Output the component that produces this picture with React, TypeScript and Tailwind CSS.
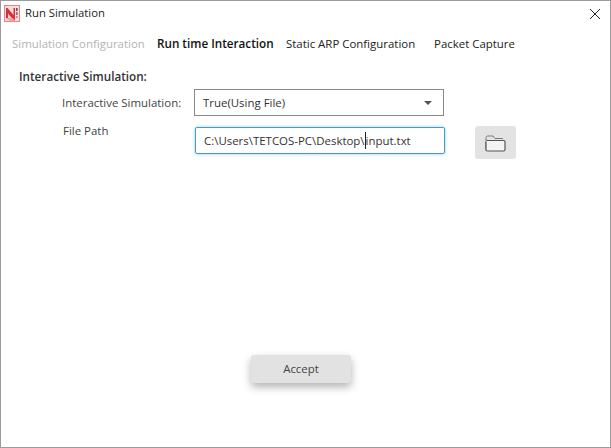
import React from "react";

const font = { fontFamily: '"Open Sans", "Noto Sans", sans-serif' };

function Logo() {
  return (
    <svg width="16" height="17" viewBox="0 0 16 17" className="shrink-0">
      <rect x="0" y="0" width="16" height="17" fill="#fbdcdc" />
      <rect x="0.5" y="0.5" width="15" height="16" fill="none" stroke="#ee8080" />
      <path d="M2 13V3h1.5l6 7V3H11v12H9.5L4 8.5V13z" fill="#d8303a" />
      <path d="M2 13l4 3h5l-2-3z" fill="#f0a0a0" />
      <rect x="12" y="3" width="1.6" height="3" fill="#555" />
      <rect x="12" y="7" width="1.6" height="3" fill="#777" />
      <rect x="12" y="11" width="1.6" height="2" fill="#999" />
    </svg>
  );
}

function FolderIcon() {
  return (
    <svg width="21" height="18" viewBox="0 0 21 18" fill="none">
      <path d="M1 16.5V3.5Q1 2 2.5 2H8l2 2.5h8" stroke="#7a7a7a" strokeWidth="1" />
      <path d="M1.5 6.5H18.5Q20 6.5 20 8V15.5Q20 17 18.5 17H2.5Q1 17 1 15.5V7.5" stroke="#555" strokeWidth="1.2" fill="#f4f4f4" />
    </svg>
  );
}

export default function App() {
  return (
    <div style={font} className="w-[611px] h-[448px] bg-white border border-[#9b9b9b] flex flex-col text-[11.45px] text-[#333] overflow-hidden">
      <div className="h-[25px] flex items-center pl-[3px] pr-[9px] shrink-0">
        <Logo />
        <span className="ml-[5px] text-[#222] text-[11.3px]">Run Simulation</span>
        <svg width="12" height="12" viewBox="0 0 12 12" className="ml-auto" stroke="#222" strokeWidth="1">
          <path d="M1 1l10 10M11 1L1 11" />
        </svg>
      </div>

      <div className="flex items-center h-[35px] pl-[11px] shrink-0">
        <span className="text-[#b4b4b4] w-[145px]">Simulation Configuration</span>
        <span className="font-semibold text-[#111] w-[129px] text-[11.7px]">Run time Interaction</span>
        <span className="text-[#222] w-[148px]">Static ARP Configuration</span>
        <span className="text-[#222]">Packet Capture</span>
      </div>

      <div className="pl-[18px] pt-[7px] font-semibold leading-[16px] text-[#333] text-[11.7px]">Interactive Simulation:</div>

      <div className="flex items-center pl-[61px] mt-[5px]">
        <span className="w-[132px] text-[#444]">Interactive Simulation:</span>
        <div className="w-[250px] h-[27px] border border-[#8a8a8a] flex items-center pl-[8px] pr-[11px] justify-between">
          <span>True(Using File)</span>
          <span className="w-0 h-0 border-x-[4px] border-x-transparent border-t-[4px] border-t-[#555]" />
        </div>
      </div>

      <div className="flex items-start pl-[62px] mt-[11px]">
        <span className="w-[132px] text-[#444] leading-[16px] mt-[-4px]">File Path</span>
        <div className="w-[250px] h-[27px] border border-[#4a9cc4] rounded-[2px] shadow-[0_0_3px_#7fc4e4] flex items-center pl-[8px]">
          <span>C:\Users\TETCOS-PC\Desktop\</span>
          <span className="w-px h-[17px] bg-[#222]" />
          <span>input.txt</span>
        </div>
        <button className="ml-[30px] mt-[-1px] w-[41px] h-[33px] bg-[#e3e3e3] rounded-[3px] flex items-center justify-center pt-[1px]">
          <FolderIcon />
        </button>
      </div>

      <div className="flex-1 flex justify-center pt-[196px]">
        <button className="ml-[-9px] w-[100px] h-[28px] bg-[#e2e2e2] rounded-[3px] shadow-[0_4px_8px_rgba(0,0,0,0.3)] text-[#444]">
          Accept
        </button>
      </div>
    </div>
  );
}
